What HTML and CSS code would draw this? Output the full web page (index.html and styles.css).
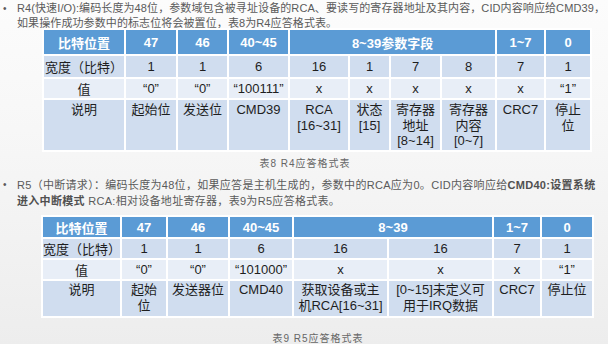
FILE: index.html
```html
<!DOCTYPE html>
<html>
<head>
<meta charset="utf-8">
<link rel="stylesheet" href="styles.css">
</head>
<body>
<div class="page">
  <div class="bullet b1">
    <span class="dot">•</span>
    <p class="btext">R4(快速I/O):编码长度为48位，参数域包含被寻址设备的RCA、要读写的寄存器地址及其内容，CID内容响应给CMD39，<br>如果操作成功参数中的标志位将会被置位，表8为R4应答格式表。</p>
  </div>

  <table class="tbl t1">
    <colgroup>
      <col class="c82"><col class="c52"><col class="c51"><col class="c61"><col class="c60"><col class="c41"><col class="c51"><col class="c55"><col class="c49"><col class="c46">
    </colgroup>
    <tr class="head h26">
      <td>比特位置</td><td>47</td><td>46</td><td>40~45</td><td colspan="4">8~39参数字段</td><td>1~7</td><td>0</td>
    </tr>
    <tr class="band r23">
      <td>宽度（比特）</td><td>1</td><td>1</td><td>6</td><td>16</td><td>1</td><td>7</td><td>8</td><td>7</td><td>1</td>
    </tr>
    <tr class="light r21">
      <td>值</td><td>“0”</td><td>“0”</td><td>“100111”</td><td>x</td><td>x</td><td>x</td><td>x</td><td>x</td><td>“1”</td>
    </tr>
    <tr class="band desc r52">
      <td>说明</td><td>起始位</td><td>发送位</td><td>CMD39</td><td>RCA<br>[16~31]</td><td>状态<br>[15]</td><td>寄存器<br>地址<br>[8~14]</td><td>寄存器<br>内容<br>[0~7]</td><td>CRC7</td><td>停止<br>位</td>
    </tr>
  </table>
  <p class="caption c1">表8 R4应答格式表</p>

  <div class="bullet b2">
    <span class="dot">•</span>
    <p class="btext">R5（中断请求）：编码长度为48位，如果应答是主机生成的，参数中的RCA应为0。CID内容响应给<b>CMD40:设置系统<br>进入中断模式</b> RCA:相对设备地址寄存器，表9为R5应答格式表。</p>
  </div>

  <table class="tbl t2">
    <colgroup>
      <col class="d79"><col class="d46"><col class="d62"><col class="d64"><col class="d95"><col class="d105"><col class="d48"><col class="d52">
    </colgroup>
    <tr class="head h22">
      <td>比特位置</td><td>47</td><td>46</td><td>40~45</td><td colspan="2">8~39</td><td>1~7</td><td>0</td>
    </tr>
    <tr class="band r21">
      <td>宽度（比特）</td><td>1</td><td>1</td><td>6</td><td>16</td><td>16</td><td>7</td><td>1</td>
    </tr>
    <tr class="light r21">
      <td>值</td><td>“0”</td><td>“0”</td><td>“101000”</td><td>x</td><td>x</td><td>x</td><td>“1”</td>
    </tr>
    <tr class="band desc2 r37">
      <td>说明</td><td>起始<br>位</td><td>发送器位</td><td>CMD40</td><td>获取设备或主<br>机RCA[16~31]</td><td>[0~15]未定义可<br>用于IRQ数据</td><td>CRC7</td><td>停止位</td>
    </tr>
  </table>
  <p class="caption c2">表9 R5应答格式表</p>
</div>
</body>
</html>
```
FILE: styles.css
```css
html, body {
  margin: 0;
  padding: 0;
}
body {
  width: 608px;
  height: 344px;
  overflow: hidden;
  background: linear-gradient(180deg, #fcfcfc 0%, #f6f6f6 45%, #ededed 100%);
  font-family: "Liberation Sans", "Noto Sans CJK SC", sans-serif;
}
.page {
  display: flex;
  flex-direction: column;
  width: 608px;
}
.bullet {
  display: flex;
  align-items: flex-start;
  color: #5a5a5a;
  font-size: 11px;
}
.b1 {
  line-height: 15px;
  padding-top: 1px;
  letter-spacing: 0.1px;
}
.b2 {
  line-height: 16px;
  margin-top: 6px;
  letter-spacing: 0.3px;
}
.dot {
  flex: 0 0 17px;
  width: 17px;
  padding-left: 3px;
  box-sizing: border-box;
  font-size: 10px;
}
.btext {
  margin: 0;
  white-space: nowrap;
  flex: 0 0 auto;
}
.btext b {
  font-weight: bold;
  color: #505050;
}
.tbl {
  border-collapse: collapse;
  table-layout: fixed;
  font-size: 13px;
  color: #1e1e1e;
}
.tbl td {
  border: 2px solid #ffffff;
  text-align: center;
  padding: 0;
  white-space: nowrap;
  overflow: hidden;
}
.t1 {
  margin-left: 42px;
  margin-top: -3px;
  width: 550px;
}
.t2 {
  margin-left: 41px;
  margin-top: 6px;
  width: 553px;
}
.head td {
  background: #5b9bd5;
  color: #ffffff;
  font-weight: bold;
}
.band td {
  background: #d0ddef;
}
.light td {
  background: #e8eef7;
}
.desc td {
  vertical-align: top;
  line-height: 15.5px;
  padding-top: 2px;
}
.desc2 td {
  vertical-align: top;
  line-height: 16px;
  padding-top: 1px;
}
.h26 { height: 26px; }
.h22 { height: 22px; }
.r23 { height: 23px; }
.r21 { height: 21px; }
.r52 { height: 52px; }
.r37 { height: 37px; }

.c82 { width: 82px; }
.c52 { width: 52px; }
.c51 { width: 51px; }
.c61 { width: 61px; }
.c60 { width: 60px; }
.c41 { width: 41px; }
.c55 { width: 55px; }
.c49 { width: 49px; }
.c46 { width: 46px; }

.d79 { width: 79px; }
.d46 { width: 46px; }
.d62 { width: 62px; }
.d64 { width: 64px; }
.d95 { width: 95px; }
.d105 { width: 105px; }
.d48 { width: 48px; }
.d52 { width: 52px; }

.caption {
  margin: 0;
  font-size: 10px;
  line-height: 14px;
  color: #666666;
  letter-spacing: 1px;
  text-align: center;
}
.c1 {
  margin-top: 5px;
  padding-left: 2px;
}
.c2 {
  margin-top: 14px;
  padding-left: 28px;
}
```
